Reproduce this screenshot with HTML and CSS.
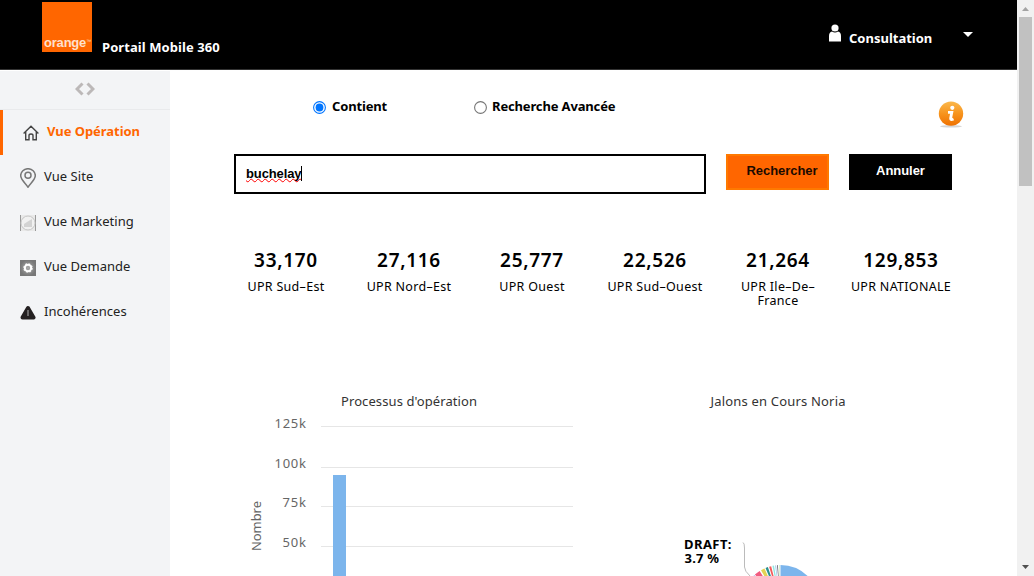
FILE: index.html
```html
<!DOCTYPE html>
<html lang="fr">
<head>
<meta charset="utf-8">
<title>Portail Mobile 360</title>
<link rel="stylesheet" href="styles.css">
</head>
<body>
<div class="page">
  <header class="header">
    <div class="logo"><span class="logo-text">orange</span><span class="logo-tm">™</span></div>
    <h1 class="brand">Portail Mobile 360</h1>
    <div class="user">
      <svg class="user-icon" width="14" height="18" viewBox="0 0 14 18" fill="#fff"><circle cx="7" cy="4" r="3.600"/><path d="M1 17.600V12Q1 8 4 7.400Q7 9.600 10 7.400Q13 8 13 12V17.600Z"/></svg>
      <span class="user-name">Consultation</span>
      <svg class="caret" width="10" height="5" viewBox="0 0 10 5"><path d="M0 0H10L5 5Z" fill="#fff"/></svg>
    </div>
  </header>
  <div class="body">
    <nav class="sidebar">
      <div class="collapse"><svg width="20" height="14" viewBox="0 0 20 14" fill="none" stroke="#bcb8b8" stroke-width="3"><path d="M7.500 1.500L2 7L7.500 12.500M12.500 1.500L18 7L12.500 12.500"/></svg></div>
      <a class="item active"><svg width="16" height="16" viewBox="0 0 16 16" fill="none" stroke="#444" stroke-width="1.400"><path d="M.6 8.500L8 1.200L15.400 8.500M2.700 7V14.800H6V10.500Q6 9 8 9T10 10.500V14.800H13.300V7"/></svg><span class="label">Vue Opération</span></a>
      <a class="item"><svg width="16" height="20" viewBox="0 0 16 20" fill="none" stroke="#777" stroke-width="1.500"><path d="M8 19.200C6.500 16 .7 12 .7 7.500A7.300 6.800 0 0 1 15.300 7.500C15.300 12 9.500 16 8 19.200Z"/><circle cx="8" cy="7.300" r="3"/></svg><span class="label">Vue Site</span></a>
      <a class="item"><svg width="16" height="16" viewBox="0 0 16 16"><path fill="#e9e9e9" d="M0 0H16V16H0Z"/><path d="M.5 0V16M15.500 0V16" stroke="#999"/><circle cx="8" cy="8" r="7" fill="#f1f1f1" stroke="#c7c7c7"/><path fill="#d3d3d3" d="M4 9L7 7L12 4V12H4Z"/></svg><span class="label">Vue Marketing</span></a>
      <a class="item"><svg width="16" height="16" viewBox="0 0 16 16"><defs><radialGradient id="gear"><stop stop-color="#aaa"/><stop offset="1" stop-color="#777"/></radialGradient></defs><path fill="url(#gear)" d="M0 0H16V16H0Z"/><circle cx="8" cy="8" r="4.200" fill="none" stroke="#eee" stroke-width="1.200" stroke-dasharray="1.800 1.500"/><circle cx="8" cy="8" r="3.200" fill="none" stroke="#fff" stroke-width="2"/></svg><span class="label">Vue Demande</span></a>
      <a class="item"><svg width="16" height="16" viewBox="0 0 16 16"><path d="M8 3L13.500 12.500H2.500Z" fill="#242021" stroke="#242021" stroke-width="4" stroke-linejoin="round"/><path d="M8 5V11" stroke="#999" stroke-width="1.200"/></svg><span class="label">Incohérences</span></a>
    </nav>
    <main class="main">
      <div class="modes">
        <label class="mode"><svg width="13" height="13" viewBox="0 0 13 13"><circle cx="6.500" cy="6.500" r="5.900" fill="#fff" stroke="#0075ff" stroke-width="1.100"/><circle cx="6.500" cy="6.500" r="3.900" fill="#0075ff"/></svg><span class="mode-text">Contient</span></label>
        <label class="mode"><svg width="13" height="13" viewBox="0 0 13 13"><circle cx="6.500" cy="6.500" r="5.900" fill="#fff" stroke="#767676" stroke-width="1.100"/></svg><span class="mode-text">Recherche Avancée</span></label>
        <svg class="info" width="26" height="27" viewBox="0 0 26 27"><defs><linearGradient id="info" x2="0" y2="1"><stop stop-color="#fbb84c"/><stop offset=".5" stop-color="#f7941d"/><stop offset="1" stop-color="#ef7100"/></linearGradient></defs><ellipse cx="13" cy="25.300" rx="11" ry="1.200" fill="#d5d5d5"/><circle cx="13" cy="12.600" r="12.200" fill="url(#info)"/><circle cx="14.300" cy="6.800" r="2.100" fill="#fff"/><path d="M10 11.300H13.800L12.600 17.500Q12.400 19.500 15.500 18" fill="none" stroke="#fff" stroke-width="2.800"/></svg>
      </div>
      <div class="search">
        <div class="field"><span class="query">buchelay</span><span class="cursor"></span></div>
        <button class="btn primary">Rechercher</button>
        <button class="btn dark">Annuler</button>
      </div>
      <div class="stats">
        <div class="stat"><b>33,170</b><span>UPR Sud–Est</span></div>
        <div class="stat"><b>27,116</b><span>UPR Nord–Est</span></div>
        <div class="stat"><b>25,777</b><span>UPR Ouest</span></div>
        <div class="stat"><b>22,526</b><span>UPR Sud–Ouest</span></div>
        <div class="stat"><b>21,264</b><span>UPR Ile–De–<br>France</span></div>
        <div class="stat"><b>129,853</b><span>UPR NATIONALE</span></div>
      </div>
      <svg class="charts" width="847" height="196" viewBox="170 380 847 196">
        <g class="chart-title"><text x="341" y="406" textLength="136">Processus d'opération</text><text x="710.500" y="406" textLength="135">Jalons en Cours Noria</text></g>
        <path d="M321 426.500H573M321 467.500H573M321 506.500H573M321 546.500H573" stroke="#e6e6e6"/>
        <g class="axis"><text x="274.500" y="428" textLength="31.500">125k</text><text x="274.500" y="468" textLength="31.500">100k</text><text x="282.500" y="507" textLength="23.500">75k</text><text x="282.500" y="547" textLength="23.500">50k</text><text transform="translate(261 551) rotate(-90)" textLength="50">Nombre</text></g>
        <path fill="#7cb5ec" d="M333 475H346V576H333Z"/>
        <g class="pie-label"><text x="684" y="549" textLength="47.500">DRAFT:</text><text x="684.500" y="563" textLength="34.500">3.7 %</text></g>
        <path d="M743 542.500Q744.500 543 744.500 548V567Q744.500 571 750 576" fill="none" stroke="#bbb"/>
        <g fill="none" stroke-width="39">
          <circle pathLength="360" cx="780.500" cy="604" r="19.500" stroke="#7cb5ec" stroke-dasharray="90 270" transform="rotate(-90 780.500 604)"/>
          <circle pathLength="360" cx="780.500" cy="604" r="19.500" stroke="#d8f0cc" stroke-dasharray="1.500 358.500" transform="rotate(-92.300 780.500 604)"/>
          <circle pathLength="360" cx="780.500" cy="604" r="19.500" stroke="#555560" stroke-dasharray="1.200 358.800" transform="rotate(-95 780.500 604)"/>
          <circle pathLength="360" cx="780.500" cy="604" r="19.500" stroke="#a9c8ee" stroke-dasharray="1.500 358.500" transform="rotate(-98 780.500 604)"/>
          <circle pathLength="360" cx="780.500" cy="604" r="19.500" stroke="#91e8e1" stroke-dasharray="2.500 357.500" transform="rotate(-102 780.500 604)"/>
          <circle pathLength="360" cx="780.500" cy="604" r="19.500" stroke="#f45b5b" stroke-dasharray="3.300 356.700" transform="rotate(-107 780.500 604)"/>
          <circle pathLength="360" cx="780.500" cy="604" r="19.500" stroke="#2b908f" stroke-dasharray="3.800 356.200" transform="rotate(-112.500 780.500 604)"/>
          <circle pathLength="360" cx="780.500" cy="604" r="19.500" stroke="#e4d354" stroke-dasharray="6 354" transform="rotate(-120 780.500 604)"/>
          <circle pathLength="360" cx="780.500" cy="604" r="19.500" stroke="#f15c80" stroke-dasharray="9 351" transform="rotate(-131 780.500 604)"/>
          <circle pathLength="360" cx="780.500" cy="604" r="19.500" stroke="#8085e9" stroke-dasharray="14 346" transform="rotate(-146 780.500 604)"/>
        </g>
      </svg>
    </main>
  </div>
</div>
<div class="scrollbar">
  <svg width="17" height="17" viewBox="0 0 17 17"><path d="M5 11H12L8.500 7Z" fill="#a3a3a3"/></svg>
  <div class="thumb"></div>
  <svg class="down" width="17" height="17" viewBox="0 0 17 17"><path d="M5 6H12L8.500 10Z" fill="#505050"/></svg>
</div>
</body>
</html>
```
FILE: styles.css
```css
* { box-sizing: border-box; }
body { margin: 0; display: flex; width: 1034px; height: 576px; overflow: hidden; background: #fff; font: 13px/14px "Noto Sans", sans-serif; color: #000; }
.page { width: 1017px; display: flex; flex-direction: column; }
.header { height: 70px; flex: none; background: #000; border-bottom: 1px solid #333; display: flex; align-items: flex-start; padding-left: 42px; color: #fff; }
.logo { width: 50px; height: 50px; margin-top: 2px; background: #ff6600; display: flex; align-items: flex-start; padding: 34px 0 0 2px; color: #ffe0cc; }
.logo-text { font: bold 13px/14px "Liberation Sans", sans-serif; letter-spacing: -.2px; }
.logo-tm { font: 5px/5px "Liberation Sans", sans-serif; margin-top: 3px; }
.brand { margin: 40px 0 0 10px; width: 120px; font-size: 13px; line-height: 14px; white-space: nowrap; letter-spacing: .08px; }
.user { display: flex; margin: 24px 44px 0 auto; }
.user-icon { margin: 0 7px 0 -1px; }
.user-name { font-weight: bold; margin-top: 7px; width: 85px; }
.caret { margin: 8px 0 0 29px; }
.body { display: flex; flex: 1; min-height: 0; }
.sidebar { width: 170px; flex: none; background: #f3f4f6; border-top: 1px solid #fff; }
.collapse { height: 39px; border-bottom: 1px solid #e9eaec; padding: 11px 0 0 75px; }
.collapse svg { display: block; }
.item { height: 45px; display: flex; align-items: center; padding-left: 20px; gap: 8px; color: #222; letter-spacing: .04px; }
.label { white-space: nowrap; margin-top: -3px; }
.active { border-left: 3px solid #ff6600; color: #ff6600; font-weight: bold; letter-spacing: -.05px; }
.main { flex: 1; min-width: 0; display: flex; flex-direction: column; }
.modes { height: 84px; display: flex; padding: 30px 0 0 143px; font-weight: bold; letter-spacing: -.15px; }
.mode { display: flex; gap: 6px; width: 161px; height: 14px; white-space: nowrap; }
.mode svg { margin-top: 1px; }
.mode-text { margin-top: -1px; }
.mode + .mode { gap: 5px; }
.info { margin-left: 303px; margin-top: 1px; }
.search { display: flex; padding-left: 64px; height: 92px; }
.field { width: 472px; height: 40px; border: 2px solid #000; padding: 10px; display: flex; font: bold 13px/16px "Liberation Sans", sans-serif; letter-spacing: -.12px; }
.query { height: 16px; text-decoration: underline wavy #f00 1px; text-underline-offset: 0; text-decoration-skip-ink: none; }
.cursor { width: 1px; height: 15px; background: #000; }
.btn { width: 103px; height: 36px; margin-left: 20px; padding: 0 0 3px; border: 2px solid #000; font: bold 13px/16px "Liberation Sans", sans-serif; letter-spacing: -.05px; }
.primary { background: #ff6600; border-color: #ff7900; padding-left: 9px; color: #1a0a00; }
.dark { background: #000; color: #fff; }
.stats { height: 134px; display: flex; padding-left: 54.500px; }
.stat { width: 123px; text-align: center; }
.stat b { display: block; font-size: 19px; font-weight: 600; line-height: 26px; letter-spacing: .7px; padding-top: 1px; margin-bottom: 7px; }
.stat span { display: block; font-size: 12.500px; letter-spacing: .3px; }
.charts { display: block; flex: none; }
.chart-title { font-size: 13px; fill: #333; }
.axis { font-size: 13px; fill: #666; }
.pie-label { font-size: 13px; font-weight: bold; }
.scrollbar { width: 17px; background: #f1f1f1; display: flex; flex-direction: column; align-items: center; }
.thumb { width: 13px; height: 169px; background: #c1c1c1; }
.down { margin-top: auto; }
```
